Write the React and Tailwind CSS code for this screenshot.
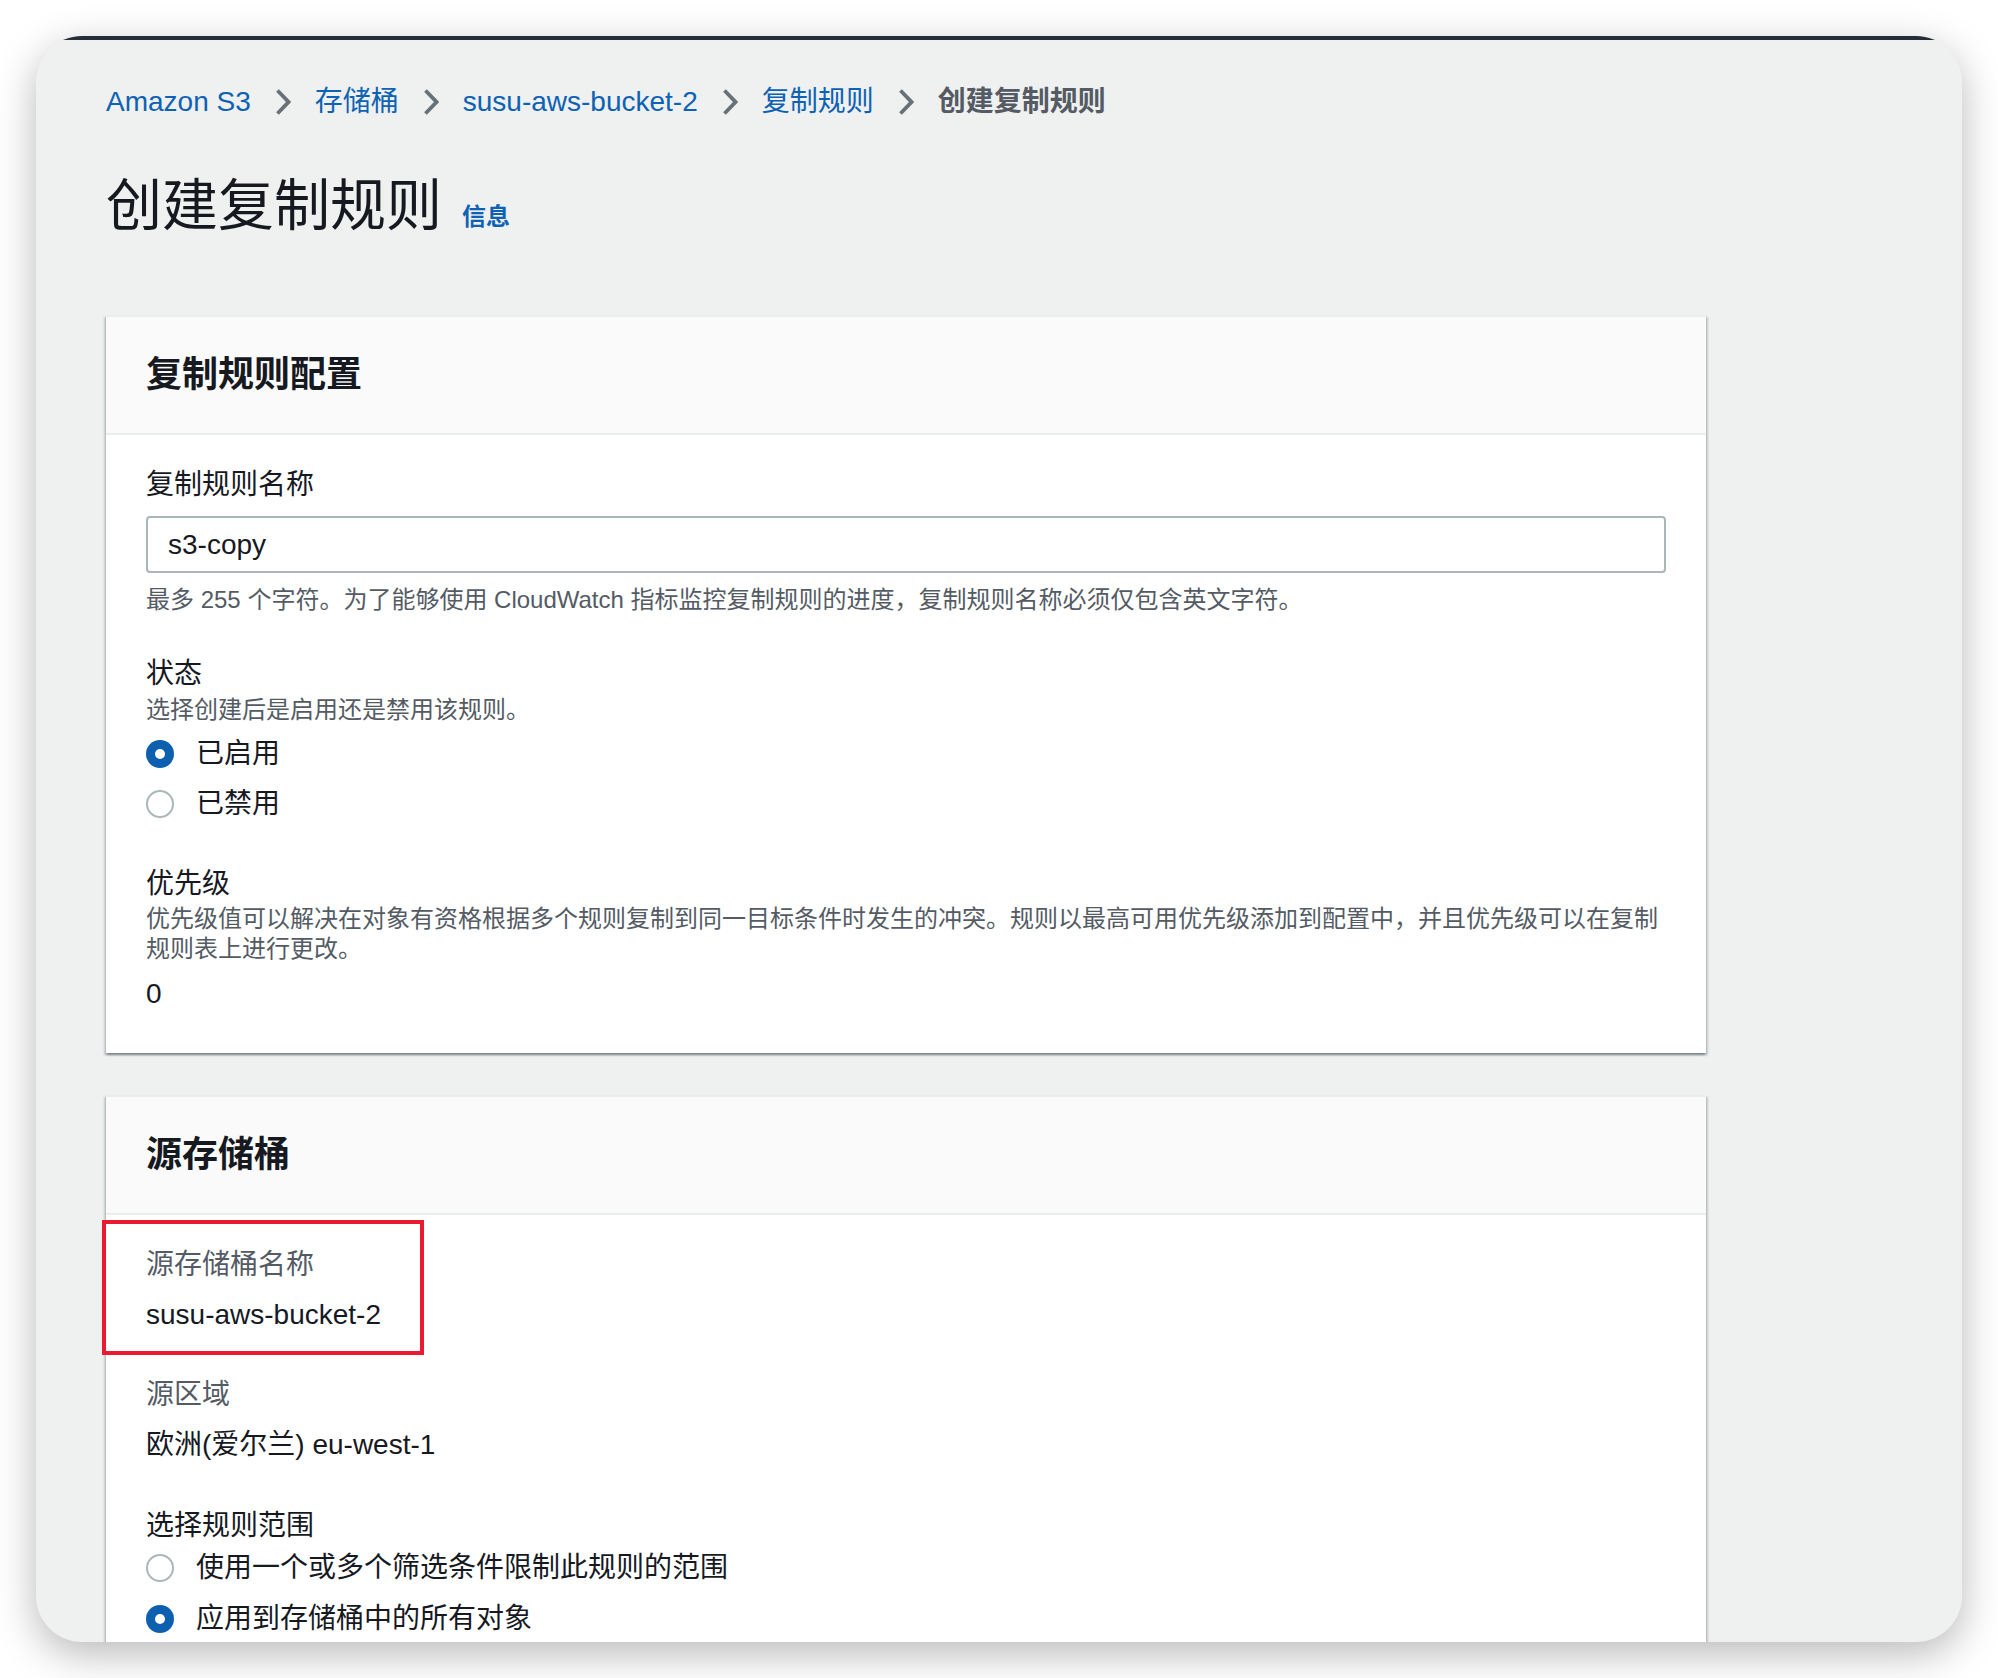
import React from "react";

const FONT = { fontFamily: '"Liberation Sans", "Noto Sans CJK SC", sans-serif' };

function Chevron() {
  return (
    <svg width="16" height="28" viewBox="0 0 16 28" className="shrink-0">
      <polyline points="2.5,2.5 13.5,14 2.5,25.5" fill="none" stroke="#687078" strokeWidth="3.8" strokeLinecap="butt" strokeLinejoin="miter" />
    </svg>
  );
}

function Radio({ checked, label }) {
  return (
    <div className="flex items-center h-[40px]">
      {checked ? (
        <div className="w-[28px] h-[28px] rounded-full bg-[#0d5fb0] flex items-center justify-center shrink-0">
          <div className="w-[10px] h-[10px] rounded-full bg-white" />
        </div>
      ) : (
        <div className="w-[28px] h-[28px] rounded-full border-[2px] border-[#aab7b8] bg-white shrink-0" />
      )}
      <span className="ml-[22px] text-[28px] leading-[40px] text-[#16191f]">{label}</span>
    </div>
  );
}

function Card({ title, children, className = "" }) {
  return (
    <div
      className={
        "w-[1600px] bg-white border-t-[2px] border-[#eaeded] shadow-[0_2px_2px_0_rgba(0,28,36,0.3),2px_2px_2px_0_rgba(0,28,36,0.15),-2px_2px_2px_0_rgba(0,28,36,0.15)] " +
        className
      }
    >
      <div className="bg-[#fafafa] border-b-[2px] border-[#eaeded] px-[40px] py-[36px]">
        <h2 className="text-[36px] leading-[44px] font-bold text-[#16191f]">{title}</h2>
      </div>
      {children}
    </div>
  );
}

export default function App() {
  return (
    <div className="w-[1998px] h-[1678px] bg-white relative overflow-hidden" style={FONT}>
      <div className="absolute left-[36px] top-[36px] w-[1926px] h-[1606px] rounded-[46px] overflow-hidden bg-[#eff0f0] shadow-[0_12px_40px_rgba(0,0,0,0.28)]">
        <div className="h-[4px] w-full bg-[#252e38]" />
        <div className="pl-[70px] pt-[42px] flex flex-col">
          {/* Breadcrumb */}
          <nav className="flex items-center gap-[24px] h-[40px] text-[28px] leading-[40px]">
            <span className="text-[#0d62b4]">Amazon S3</span>
            <Chevron />
            <span className="text-[#0d62b4]">存储桶</span>
            <Chevron />
            <span className="text-[#0d62b4]">susu-aws-bucket-2</span>
            <Chevron />
            <span className="text-[#0d62b4]">复制规则</span>
            <Chevron />
            <span className="text-[#545b64] font-bold">创建复制规则</span>
          </nav>

          {/* Title */}
          <div className="mt-[52px] flex items-baseline gap-[20px]">
            <h1 className="text-[56px] leading-[64px] text-[#16191f] font-normal">创建复制规则</h1>
            <span className="text-[24px] leading-[32px] font-bold text-[#0d62b4]">信息</span>
          </div>

          {/* Card 1 */}
          <Card title="复制规则配置" className="mt-[77px]">
            <div className="px-[40px] pt-[30px] pb-[39px] flex flex-col">
              <div className="text-[28px] leading-[40px] text-[#16191f]">复制规则名称</div>
              <div className="mt-[11px] h-[57px] w-full border-[2px] border-[#aab7b8] rounded-[4px] flex items-center px-[20px]">
                <span className="text-[28px] leading-[40px] text-[#16191f]">s3-copy</span>
              </div>
              <div className="mt-[11px] text-[24px] leading-[32px] text-[#545b64]">
                最多 255 个字符。为了能够使用 CloudWatch 指标监控复制规则的进度，复制规则名称必须仅包含英文字符。
              </div>

              <div className="mt-[38px] text-[28px] leading-[40px] text-[#16191f]">状态</div>
              <div className="text-[24px] leading-[32px] text-[#545b64]">选择创建后是启用还是禁用该规则。</div>
              <div className="mt-[8px] flex flex-col gap-[10px]">
                <Radio checked label="已启用" />
                <Radio label="已禁用" />
              </div>

              <div className="mt-[40px] text-[28px] leading-[40px] text-[#16191f]">优先级</div>
              <div className="text-[24px] leading-[30px] text-[#545b64]">
                优先级值可以解决在对象有资格根据多个规则复制到同一目标条件时发生的冲突。规则以最高可用优先级添加到配置中，并且优先级可以在复制规则表上进行更改。
              </div>
              <div className="mt-[10px] text-[28px] leading-[40px] text-[#16191f]">0</div>
            </div>
          </Card>

          {/* Card 2 */}
          <Card title="源存储桶" className="mt-[42px]">
            <div className="relative px-[40px] pt-[30px] pb-[40px] flex flex-col">
              <div className="absolute left-[-4px] top-[5px] w-[322px] h-[135px] border-[4px] border-[#ea1a30] pointer-events-none" />
              <div className="text-[28px] leading-[40px] text-[#545b64]">源存储桶名称</div>
              <div className="mt-[10px] text-[28px] leading-[40px] text-[#16191f]">susu-aws-bucket-2</div>

              <div className="mt-[40px] text-[28px] leading-[40px] text-[#545b64]">源区域</div>
              <div className="mt-[10px] text-[28px] leading-[40px] text-[#16191f]">欧洲(爱尔兰) eu-west-1</div>

              <div className="mt-[41px] text-[28px] leading-[40px] text-[#16191f]">选择规则范围</div>
              <div className="mt-[2px] flex flex-col gap-[11px]">
                <Radio label="使用一个或多个筛选条件限制此规则的范围" />
                <Radio checked label="应用到存储桶中的所有对象" />
              </div>
            </div>
          </Card>
        </div>
      </div>
    </div>
  );
}
